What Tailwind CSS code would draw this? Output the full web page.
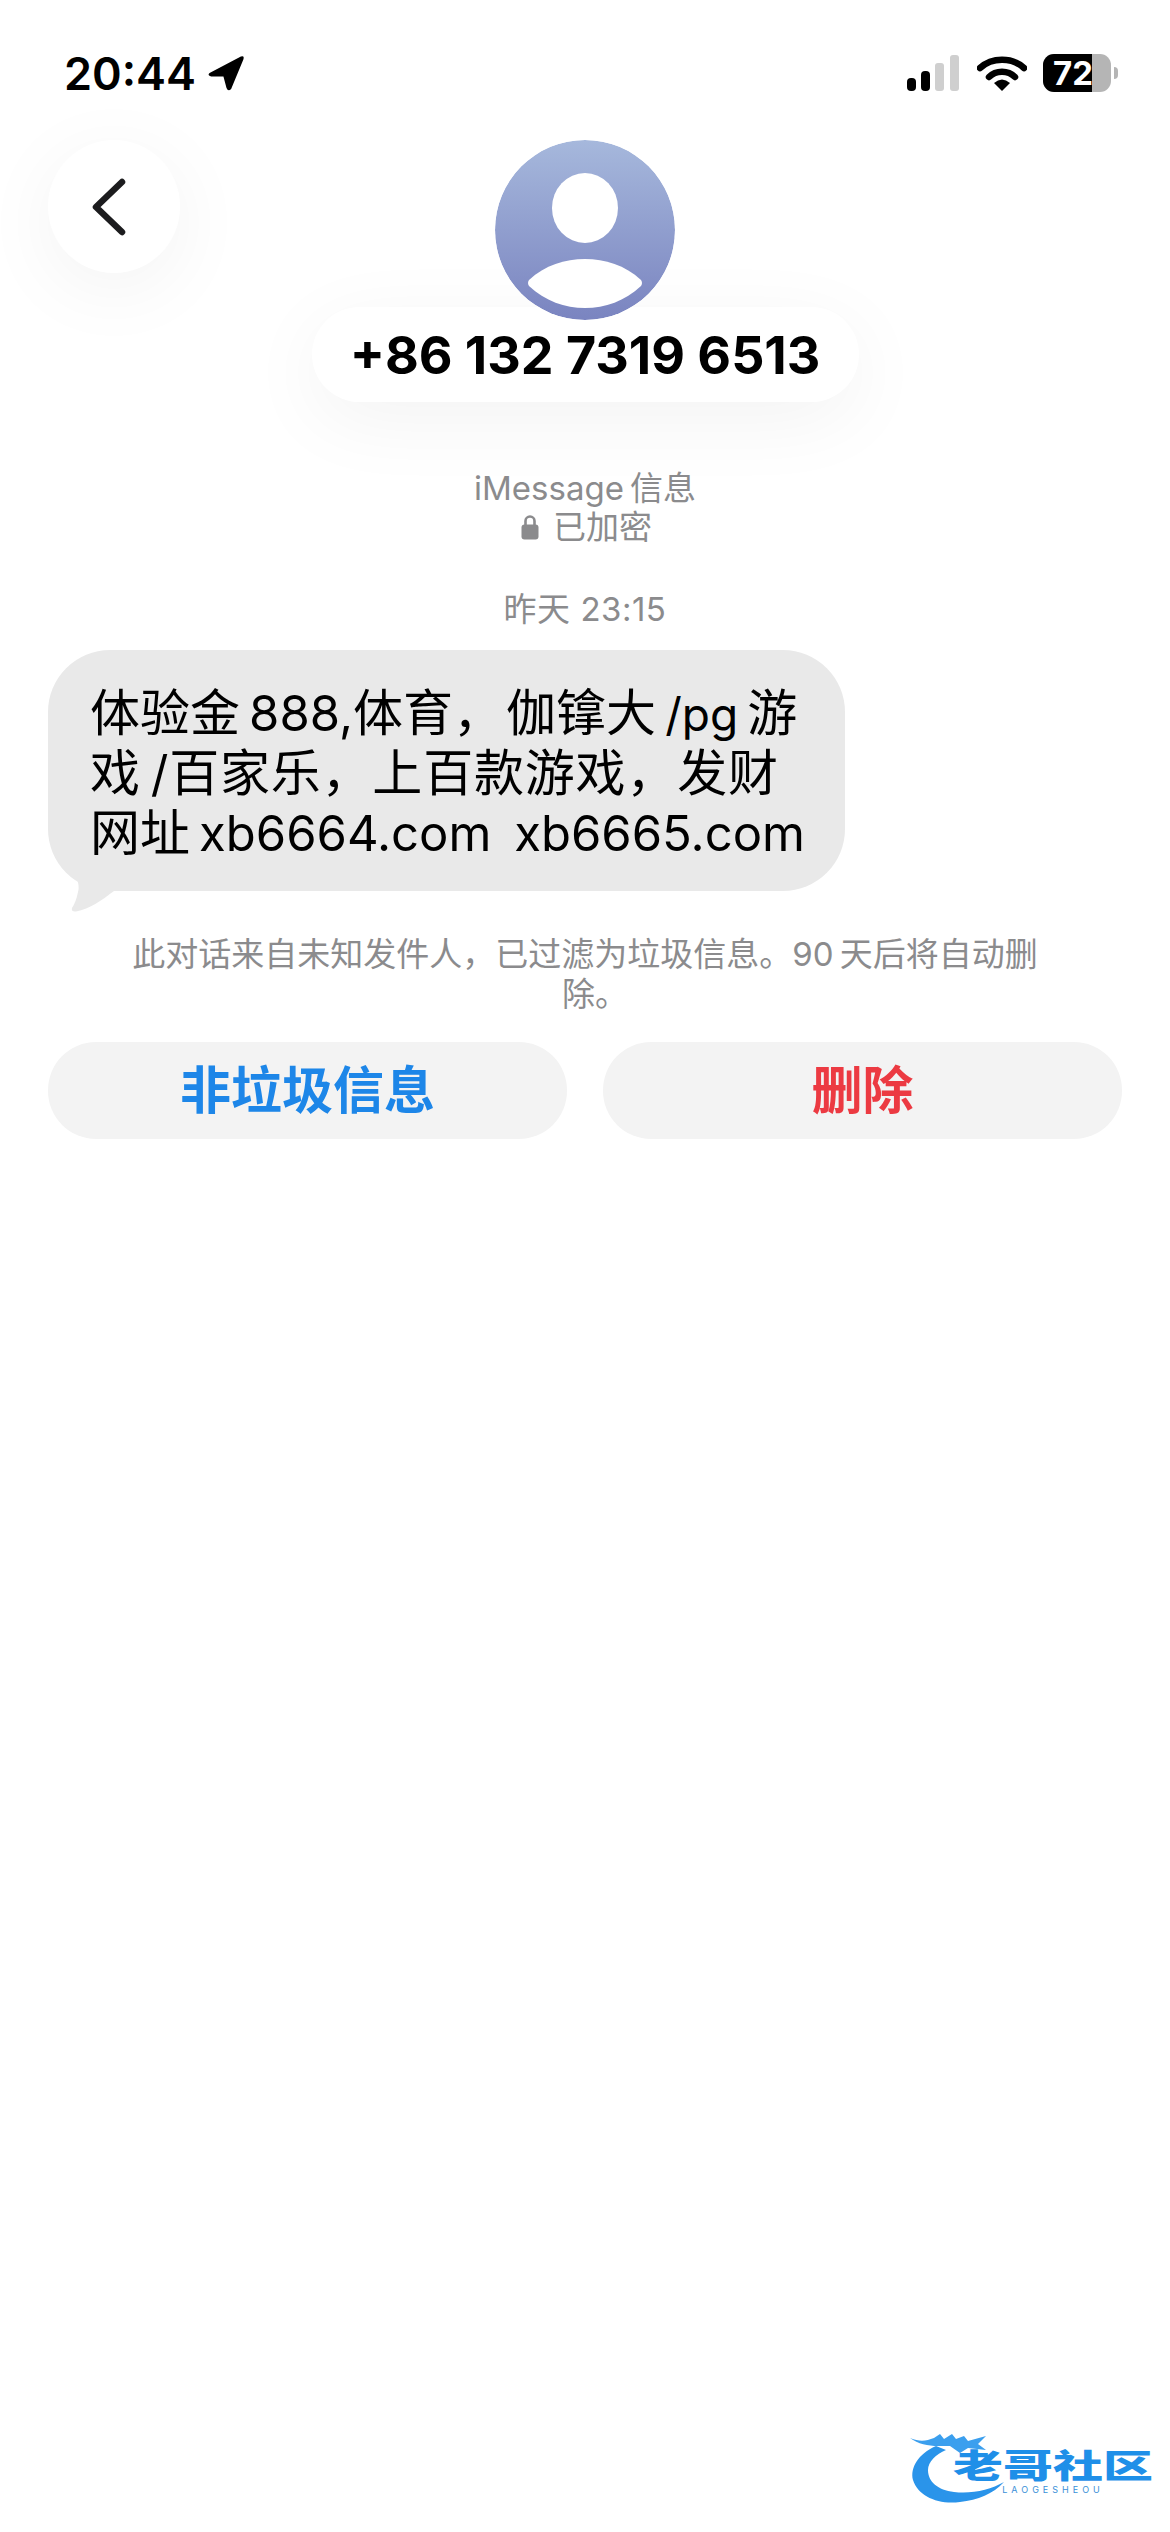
<!DOCTYPE html>
<html lang="en">
  <head>
    <meta charset="UTF-8" />
    <meta name="viewport" content="width=device-width, initial-scale=1.0" />
    <title>Messages</title>
    <script src="https://cdn.jsdelivr.net/npm/@tailwindcss/browser@4"></script>
  </head>
  <body class="bg-white w-[1170px] h-[2532px] overflow-hidden flex flex-col font-['Inter','Noto_Sans_CJK_SC',sans-serif]">
    <!-- status bar -->
    <div class="h-[140px] shrink-0 flex items-start justify-between pl-[64px] pr-[52px] pt-[48px]">
      <div class="flex items-center gap-[11px] h-[50px]">
        <span class="text-[45px] leading-[50px] pt-[2px] font-semibold text-black">20:44</span>
        <svg class="w-[38px] h-[38px]" viewBox="0 0 37 37">
          <path d="M2.5 18.5 L33 2.5 Q36.5 1 35.5 5 L23.5 34 Q20.5 37 19 33 L16 22 L4 22 Q0 20.5 2.5 18.5 Z" fill="#000" />
        </svg>
      </div>
      <div class="flex items-center h-[50px]">
        <svg class="w-[52px] h-[36px]" viewBox="0 0 52 36">
          <rect x="0" y="23" width="9" height="13" rx="4" fill="#000" />
          <rect x="14" y="16" width="9" height="20" rx="4" fill="#000" />
          <rect x="28" y="8" width="9" height="28" rx="3" fill="#cfcfcf" />
          <rect x="43" y="0" width="9" height="36" rx="3" fill="#cfcfcf" />
        </svg>
        <svg class="w-[50px] h-[36px] ml-[18px]" viewBox="0 0 50 36">
          <path d="M3 13 C15 2 35 2 47 13" fill="none" stroke="#000" stroke-width="6.5" stroke-linecap="round" />
          <path d="M12 22 C19 15 31 15 38 22" fill="none" stroke="#000" stroke-width="6.5" stroke-linecap="round" />
          <path d="M17 28 Q25 21 33 28 L25 36 Z" fill="#000" />
        </svg>
        <div class="ml-[16px] w-[68px] h-[38px] rounded-[11px] overflow-hidden flex bg-[#b5b5b5] relative">
          <div class="w-[49px] bg-black"></div>
          <span class="absolute inset-0 text-center pr-[8px] text-white font-bold text-[33px] leading-[38px]">72</span>
        </div>
        <div class="ml-[3px] w-[4px] h-[12px] rounded-r-full bg-[#b5b5b5]"></div>
      </div>
    </div>

    <!-- header -->
    <div class="grid grid-cols-[132px_1fr_132px] px-[48px] shrink-0">
      <button class="w-[132px] h-[133px] rounded-full bg-white shadow-[0_16px_80px_rgba(0,0,0,0.05)] flex items-center justify-center">
        <svg class="w-[36px] h-[58px] -ml-[10px]" viewBox="0 0 36 58">
          <path d="M31 4 L5 29 L31 54" fill="none" stroke="#1c1c1e" stroke-width="6.5" stroke-linecap="round" stroke-linejoin="round" />
        </svg>
      </button>
      <div class="flex flex-col items-center">
        <svg class="w-[180px] h-[180px] relative z-10 rounded-full" viewBox="0 0 180 180">
          <defs>
            <linearGradient id="avatarFill" x1="0" y1="0" x2="0" y2="1">
              <stop offset="0" stop-color="#a6b8dc" />
              <stop offset="1" stop-color="#7a84c0" />
            </linearGradient>
          </defs>
          <circle cx="90" cy="90" r="90" fill="url(#avatarFill)" />
          <ellipse cx="90" cy="68" rx="33" ry="35" fill="#fff" />
          <path d="M34 140 C50 125 70 119 90 119 C110 119 130 125 146 140 Q148 143 146 146 C130 161 110 168 90 168 C70 168 50 161 34 146 Q32 143 34 140 Z" fill="#fff" />
        </svg>
        <div class="-mt-[13px] w-[547px] h-[95px] pt-[2px] rounded-[48px] bg-white shadow-[0_18px_80px_rgba(0,0,0,0.05)] flex items-center justify-center">
          <span class="text-[52px] font-bold text-black leading-none">+86 132 7319 6513</span>
        </div>
      </div>
      <div></div>
    </div>

    <!-- thread -->
    <div class="flex flex-col items-center mt-[66px] text-[#8b8b8d] text-[33px] leading-[40px]">
      <div class="h-[39px]">iMessage&#8201;信息</div>
      <div class="flex items-center gap-[14px] ml-[3px]">
        <svg class="w-[18px] h-[26px]" viewBox="0 0 18 26">
          <path d="M4.5 11 V7 A4.5 4.5 0 0 1 13.5 7 V11" fill="none" stroke="#8b8b8d" stroke-width="2.6" />
          <rect x="0.5" y="10.5" width="17" height="15" rx="3" fill="#8b8b8d" />
        </svg>
        <span>已加密</span>
      </div>
      <div class="mt-[42px] tracking-[0.5px]">昨天 23:15</div>
    </div>

    <div class="px-[48px] mt-[21px]">
      <div class="relative w-[797px] h-[241px] rounded-[62px] bg-[#e9e9e9] pl-[42px] pt-[33px] text-[50px] leading-[60px] text-black whitespace-nowrap">
        <div class="h-[60px]">体验金&#8201;<span class="text-[49px]">888,</span>体育，<span class="ml-[3px]">伽镎大</span>&#8201;<span class="text-[46px]">/pg</span>&#8201;游</div>
        <div class="h-[60px] tracking-[0.8px]">戏&#8201;<span class="text-[49px]">/</span>百家乐，上百款游戏，发财</div>
        <div class="h-[60px]">网址&#8201;<span class="text-[49px]">xb6664.com&nbsp;<span class="ml-[9px]">xb6665.com</span></span></div>
        <svg class="absolute left-[20px] bottom-[-21px] w-[54px] h-[50px]" viewBox="0 0 54 50">
          <path d="M8 14 Q12 24 10 30 Q8 40 4 46 Q3 50 8 49.5 C22 47 34 38 46 29 L46 10 Z" fill="#e9e9e9" />
        </svg>
      </div>
    </div>

    <p class="mt-[43px] mx-auto w-[910px] text-center text-[33px] leading-[40px] text-[#8b8b8d]">此对话来自未知发件人，已过滤为垃圾信息。90&#8201;天后将自动删<span class="ml-[20px]">除。</span></p>

    <div class="grid grid-cols-2 gap-[36px] px-[48px] mt-[28px]">
      <button class="h-[97px] pt-[1px] rounded-[48px] bg-[#f3f3f3] text-[51px] font-semibold text-[#1d86e8]">非垃圾信息</button>
      <button class="h-[97px] pt-[1px] rounded-[48px] bg-[#f3f3f3] text-[51px] font-semibold text-[#ec3a42]">删除</button>
    </div>

    <!-- watermark -->
    <div class="mt-auto mb-[26px] mr-[19px] self-end flex items-end w-[243px] h-[80px]">
      <svg class="w-[100px] h-[80px] shrink-0" viewBox="0 0 100 80">
        <path d="M28 20 C10 28 2 42 5 54 C10 70 30 79 52 76 C70 74 85 68 96 56 C82 64 64 68 46 66 C30 64 20 56 20 44 C20 36 28 28 38 24 Z" fill="#2a94ea" />
        <path d="M2 12 C12 16 18 15 26 12 L32 8 L36 13 L44 8 L48 13 L56 10 L60 15 L78 10 L70 18 L78 24 L60 22 L52 27 L42 20 L30 20 C20 20 10 18 2 12 Z" fill="#3b9fee" />
      </svg>
      <div class="-ml-[55px] flex flex-col items-center pb-[11px]">
        <span class="text-[50px] leading-[30px] font-black text-[#1f8fe8] whitespace-nowrap scale-y-[0.65]">老哥社区</span>
        <span class="mt-[4px] text-[9px] leading-[10px] text-[#3a8fd8] tracking-[4px]">LAOGESHEOU</span>
      </div>
    </div>
  </body>
</html>
